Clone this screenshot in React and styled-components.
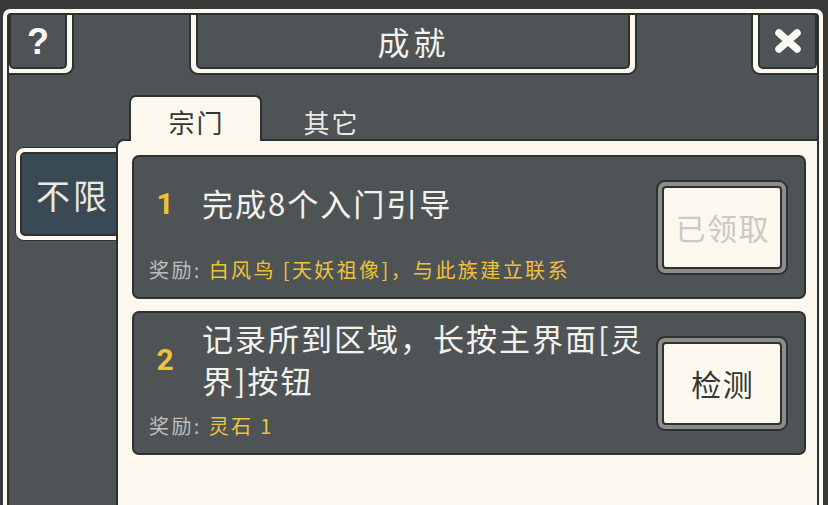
import React from "react";
import styled, { createGlobalStyle } from "styled-components";

const CJK = `"Noto Sans CJK SC", "Noto Sans", sans-serif`;

const GlobalStyle = createGlobalStyle`
  html, body {
    margin: 0;
    height: 100%;
    overflow: hidden;
    background: #383838;
  }
  #root {
    height: 100%;
  }
`;

const tasks = [
  {
    id: 1,
    title: "完成8个入门引导",
    reward: "白风鸟 [天妖祖像]，与此族建立联系",
    claimed: true,
  },
  {
    id: 2,
    title: "记录所到区域，长按主界面[灵界]按钮",
    reward: "灵石 1",
    claimed: false,
  },
];

export default function App() {
  return (
    <>
      <GlobalStyle />
      <Frame>
        <Inner>
          <Header>
            <HeadBox $right>
              <HeadFill>
                <Help>?</Help>
              </HeadFill>
            </HeadBox>
            <span />
            <HeadBox $left $right>
              <HeadFill>
                <Title>成就</Title>
              </HeadFill>
            </HeadBox>
            <span />
            <HeadBox $left>
              <HeadFill>
                <svg width="30" height="26" viewBox="0 0 30 26">
                  <path
                    d="M6 5 L24 21 M24 5 L6 21"
                    stroke="#fbfaf6"
                    strokeWidth="7.5"
                    strokeLinecap="round"
                  />
                </svg>
              </HeadFill>
            </HeadBox>
          </Header>

          <Body>
            <Tabs>
              <Tab $active>宗门</Tab>
              <Tab>其它</Tab>
            </Tabs>
            <Sidebar>
              <FilterButton>
                <FilterFace>不限</FilterFace>
              </FilterButton>
            </Sidebar>
            <Panel>
              {tasks.map((t) => (
                <Card key={t.id}>
                  <CardMain>
                    <CardHead>
                      <Num>{t.id}</Num>
                      <TaskTitle>{t.title}</TaskTitle>
                    </CardHead>
                    <Reward>
                      奖励: <Gold>{t.reward}</Gold>
                    </Reward>
                  </CardMain>
                  <ActionButton>
                    <ActionFace $done={t.claimed}>
                      {t.claimed ? "已领取" : "检测"}
                    </ActionFace>
                  </ActionButton>
                </Card>
              ))}
            </Panel>
          </Body>
        </Inner>
      </Frame>
    </>
  );
}

const Frame = styled.div`
  margin: 9px 5px 0 3px;
  height: calc(100% + 20px);
  background: #fcf8ee;
  border-radius: 7px 7px 0 0;
  padding: 4px 4px 0 4px;
  box-sizing: border-box;
  display: flex;
`;

const Inner = styled.div`
  flex: 1;
  display: flex;
  flex-direction: column;
  background: #4e5456;
  border: 2px solid #2e3131;
  border-bottom: none;
  border-radius: 4px 4px 0 0;
  font-family: ${CJK};
`;

const Header = styled.div`
  display: grid;
  grid-template-columns: 65px 1fr 448px 1fr 66px;
  height: 60px;
`;

const HeadBox = styled.div`
  display: flex;
  background: #fcf8ee;
  border-bottom: 2px solid #2e3131;
  border-left: ${(p) => (p.$left ? "2px solid #2e3131" : "none")};
  border-right: ${(p) => (p.$right ? "2px solid #2e3131" : "none")};
  padding: 0 ${(p) => (p.$right ? "5px" : "0")} 4px ${(p) => (p.$left ? "5px" : "0")};
  border-radius: 0 0 ${(p) => (p.$right ? "9px" : "0")} ${(p) => (p.$left ? "9px" : "0")};
`;

const HeadFill = styled.div`
  flex: 1;
  display: flex;
  align-items: center;
  justify-content: center;
  background: #4e5456;
  border: 2px solid #2e3131;
  border-top: none;
  border-radius: 0 0 5px 5px;
`;

const Help = styled.span`
  font-family: "Liberation Sans", Arial, sans-serif;
  font-weight: 700;
  font-size: 36px;
  line-height: 1;
  color: #fbfaf6;
  margin-top: 2px;
`;

const Title = styled.span`
  font-size: 32px;
  letter-spacing: 4px;
  padding-left: 2px;
  color: #f4f2ec;
  line-height: 1;
`;

const Body = styled.div`
  flex: 1;
  display: grid;
  grid-template-columns: 107px 1fr;
  grid-template-rows: auto 1fr;
`;

const Tabs = styled.div`
  grid-column: 2;
  grid-row: 1;
  display: flex;
  gap: 2px;
  margin: 20px 0 0 13px;
  position: relative;
  z-index: 2;
`;

const Tab = styled.div`
  width: 133px;
  height: 46px;
  box-sizing: border-box;
  margin-bottom: -2px;
  padding-top: 10px;
  line-height: 30px;
  text-align: center;
  font-size: 26px;
  letter-spacing: 2px;
  text-indent: 2px;
  color: ${(p) => (p.$active ? "#333535" : "#ece9e1")};
  background: ${(p) => (p.$active ? "#fcf8ee" : "transparent")};
  border: 2px solid ${(p) => (p.$active ? "#2e3131" : "transparent")};
  border-bottom: none;
  border-radius: 7px 7px 0 0;
`;

const Sidebar = styled.div`
  grid-column: 1;
  grid-row: 2;
  padding: 8px 0 0 6px;
`;

const FilterButton = styled.div`
  width: 112px;
  height: 94px;
  box-sizing: border-box;
  margin-right: -12px;
  display: flex;
  background: #fcf8ee;
  border: 1.5px solid #2e3131;
  border-radius: 9px;
  padding: 4px;
`;

const FilterFace = styled.div`
  flex: 1;
  display: flex;
  align-items: center;
  padding-left: 14px;
  background: #3a4a55;
  border: 2px solid #2e3131;
  border-radius: 5px;
  font-size: 34px;
  letter-spacing: 3px;
  color: #ebe8e0;
`;

const Panel = styled.div`
  grid-column: 2;
  grid-row: 2;
  position: relative;
  z-index: 1;
  background: #fcf8ee;
  border: 2px solid #2e3131;
  border-right: none;
  border-bottom: none;
  border-radius: 8px 0 0 0;
  padding: 14px 11px 0 14px;
  display: flex;
  flex-direction: column;
  gap: 12px;
`;

const Card = styled.div`
  height: 144px;
  box-sizing: border-box;
  display: flex;
  align-items: center;
  background: #4e5456;
  border: 2px solid #2e3131;
  border-radius: 7px;
`;

const CardMain = styled.div`
  flex: 1;
  align-self: stretch;
  display: flex;
  flex-direction: column;
  margin-right: 2px;
`;

const CardHead = styled.div`
  flex: 1;
  display: flex;
  align-items: center;
  padding: 0 0 8px 14px;
`;

const Num = styled.div`
  width: 34px;
  flex-shrink: 0;
  text-align: center;
  font-family: Roboto, "Liberation Sans", sans-serif;
  font-weight: 700;
  font-size: 30px;
  color: #efc23a;
`;

const TaskTitle = styled.div`
  margin-left: 20px;
  font-size: 31px;
  line-height: 42px;
  letter-spacing: 2px;
  color: #f4f2ec;
`;

const Reward = styled.div`
  padding: 0 0 14px 15px;
  font-size: 20px;
  line-height: 26px;
  letter-spacing: 2.4px;
  color: #bdbdbb;
  white-space: nowrap;
`;

const Gold = styled.span`
  color: #efc23a;
`;

const ActionButton = styled.div`
  width: 132px;
  height: 95px;
  box-sizing: border-box;
  margin-right: 16px;
  display: flex;
  background: #8c8c8a;
  border: 2px solid #2e3131;
  border-radius: 9px;
  padding: 4px;
`;

const ActionFace = styled.div`
  flex: 1;
  display: flex;
  align-items: center;
  justify-content: center;
  background: #fcf8ee;
  border: 2px solid #2e3131;
  border-radius: 4px;
  font-size: 30px;
  letter-spacing: 1.5px;
  text-indent: 1.5px;
  color: ${(p) => (p.$done ? "#c9c9c7" : "#333535")};
`;
